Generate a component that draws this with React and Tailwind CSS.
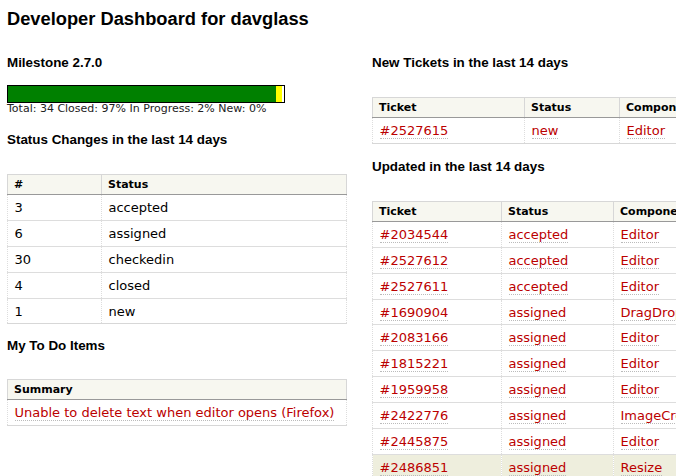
import React from "react";

const statusChanges = [
  ["3", "accepted"],
  ["6", "assigned"],
  ["30", "checkedin"],
  ["4", "closed"],
  ["1", "new"],
];

const updated = [
  ["#2034544", "accepted", "Editor"],
  ["#2527612", "accepted", "Editor"],
  ["#2527611", "accepted", "Editor"],
  ["#1690904", "assigned", "DragDrop"],
  ["#2083166", "assigned", "Editor"],
  ["#1815221", "assigned", "Editor"],
  ["#1959958", "assigned", "Editor"],
  ["#2422776", "assigned", "ImageCropper"],
  ["#2445875", "assigned", "Editor"],
  ["#2486851", "assigned", "Resize"],
];

const sans = "font-['Liberation_Sans',Arial,sans-serif]";
const verdana = "font-['DejaVu_Sans',Verdana,sans-serif]";

const TLink = ({ children }) => (
  <a href="#" className="text-[#bb0000] border-b border-dotted border-[#bbb] no-underline">
    {children}
  </a>
);

const Th = ({ children, w }) => (
  <th
    className={`${w || ""} text-left font-bold text-[11px] leading-[14px] px-[6px] pt-[3px] pb-[2px] border border-[#d7d7d7] border-b-[#999] bg-[#f7f7f0] text-black whitespace-nowrap overflow-hidden`}
  >
    {children}
  </th>
);

const Td = ({ children }) => (
  <td className="text-[13px] leading-[16px] px-[6.5px] pt-[5px] pb-[3.9px] border border-dotted border-[#ddd] text-black whitespace-nowrap overflow-hidden">
    {children}
  </td>
);

const Heading = ({ children, className }) => (
  <h2 className={`${sans} font-bold text-[13.4px] leading-[16px] text-black ${className || ""}`}>
    {children}
  </h2>
);

export default function App() {
  return (
    <div className={`w-[676px] h-[476px] overflow-hidden bg-white ${verdana}`}>
      <h1 className={`${sans} font-bold text-[18.3px] leading-[24px] text-black mt-[7px] ml-[7px] whitespace-nowrap`}>
        Developer Dashboard for davglass
      </h1>

      <div className="flex pl-[7px]">
        {/* left column */}
        <div className="w-[340px] shrink-0">
          <Heading className="mt-[24px]">Milestone 2.7.0</Heading>
          <div className="mt-[14px] w-[278px] h-[18px] border border-black flex bg-white">
            <div className="bg-[#008000] w-[268px] h-full" />
            <div className="bg-[#ffff00] w-[6px] h-full" />
          </div>
          <p className="text-[11px] leading-[12px] text-[#222] whitespace-nowrap">
            Total: 34 Closed: 97% In Progress: 2% New: 0%
          </p>

          <Heading className="mt-[17px]">Status Changes in the last 14 days</Heading>
          <table className="mt-[26px] w-full table-fixed border-collapse border-b border-[#d7d7d7]">
            <thead>
              <tr>
                <Th w="w-[94px]">#</Th>
                <Th>Status</Th>
              </tr>
            </thead>
            <tbody>
              {statusChanges.map(([n, s]) => (
                <tr key={s} className="border-t border-[#ddd]">
                  <Td>{n}</Td>
                  <Td>{s}</Td>
                </tr>
              ))}
            </tbody>
          </table>

          <Heading className="mt-[14px]">My To Do Items</Heading>
          <table className="mt-[25px] w-full table-fixed border-collapse border-b border-[#d7d7d7]">
            <thead>
              <tr>
                <Th>Summary</Th>
              </tr>
            </thead>
            <tbody>
              <tr className="border-t border-[#ddd]">
                <Td>
                  <TLink>Unable to delete text when editor opens (Firefox)</TLink>
                </Td>
              </tr>
            </tbody>
          </table>
        </div>

        {/* right column */}
        <div className="w-[340px] shrink-0 ml-[25px]">
          <Heading className="mt-[24px]">New Tickets in the last 14 days</Heading>
          <table className="mt-[26px] w-full table-fixed border-collapse border-b border-[#d7d7d7]">
            <thead>
              <tr>
                <Th w="w-[152px]">Ticket</Th>
                <Th w="w-[95px]">Status</Th>
                <Th>Component</Th>
              </tr>
            </thead>
            <tbody>
              <tr className="border-t border-[#ddd]">
                <Td><TLink>#2527615</TLink></Td>
                <Td><TLink>new</TLink></Td>
                <Td><TLink>Editor</TLink></Td>
              </tr>
            </tbody>
          </table>

          <Heading className="mt-[15px]">Updated in the last 14 days</Heading>
          <table className="mt-[26px] w-full table-fixed border-collapse border-b border-[#d7d7d7]">
            <thead>
              <tr>
                <Th w="w-[129px]">Ticket</Th>
                <Th w="w-[112px]">Status</Th>
                <Th>Component</Th>
              </tr>
            </thead>
            <tbody>
              {updated.map(([t, s, c], i) => (
                <tr
                  key={t}
                  className={`border-t border-[#ddd] ${i === updated.length - 1 ? "bg-[#eeeedd]" : ""}`}
                >
                  <Td><TLink>{t}</TLink></Td>
                  <Td><TLink>{s}</TLink></Td>
                  <Td><TLink>{c}</TLink></Td>
                </tr>
              ))}
            </tbody>
          </table>
        </div>
      </div>
    </div>
  );
}
